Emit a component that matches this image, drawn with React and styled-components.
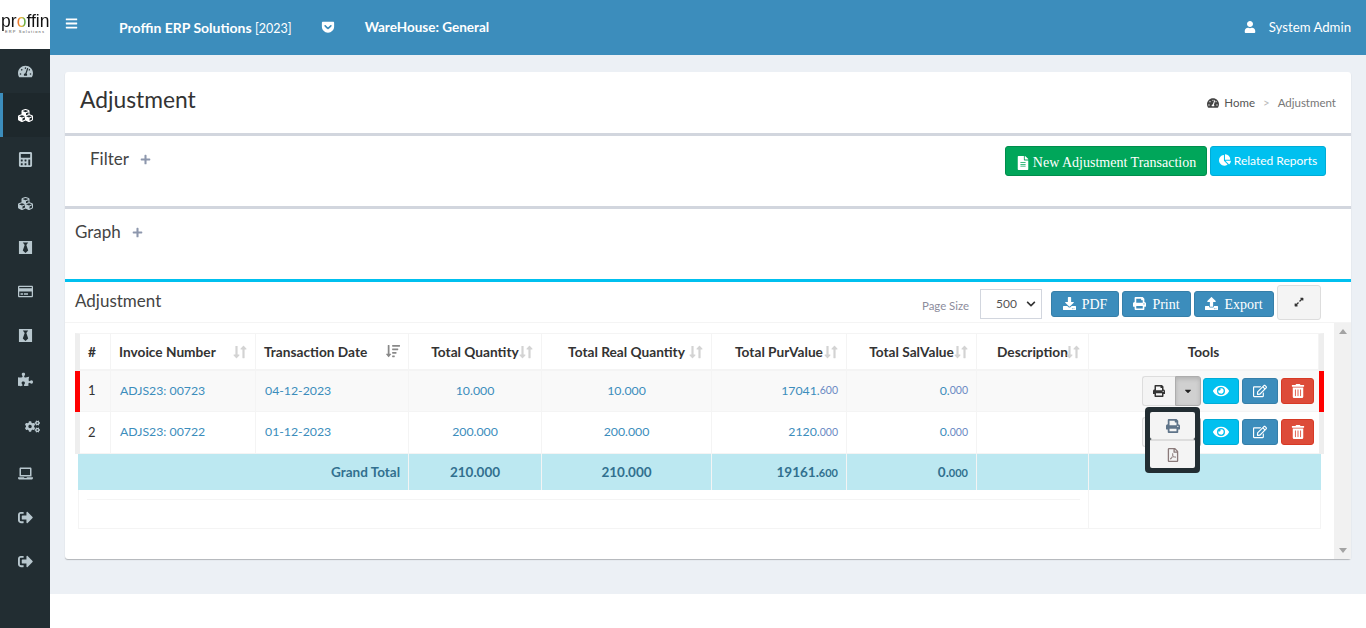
import React from 'react';
import styled, { createGlobalStyle } from 'styled-components';
import {
  FaBars, FaBlackTie, FaCalculator, FaChartPie, FaCogs, FaCubes, FaDownload, FaRegEdit,
  FaExpandAlt, FaEye, FaFileAlt, FaGetPocket, FaLaptop, FaLongArrowAltDown, FaLongArrowAltUp, FaPlus,
  FaPrint, FaPuzzlePiece, FaRegCreditCard, FaRegFilePdf, FaSignOutAlt, FaSortAmountDown, FaTachometerAlt,
  FaTrashAlt, FaUpload, FaUser, FaCaretDown, FaChevronDown,
} from 'react-icons/fa';

const Global = createGlobalStyle`
  html, body { margin: 0; padding: 0; height: 628px; overflow: hidden; background: #fff; }
  body { font-family: Lato, "Noto Sans", sans-serif; font-size: 14px; color: #333; }
  * { box-sizing: border-box; }
`;

const Shell = styled.div`
  display: flex;
  height: 628px;
`;

const Sidebar = styled.aside`
  width: 50px;
  flex: none;
  background: #222d32;
`;

const LogoBox = styled.div`
  height: 49px;
  background: #fff;
  display: flex;
  flex-direction: column;
  align-items: center;
  padding-top: 12px;
  color: #111;
  overflow: hidden;
`;

const LogoName = styled.div`
  font: 400 19px/18px "Liberation Sans", sans-serif;
  transform: scaleX(0.92);
  & b {
    font-weight: 400;
    background: linear-gradient(90deg, #e8562a, #f0b030 45%, #3fae49);
    -webkit-background-clip: text;
    background-clip: text;
    color: transparent;
  }
`;

const LogoTag = styled.div`
  margin-top: -1px;
  font: 400 4px/6px "Liberation Sans", sans-serif;
  letter-spacing: 1.1px;
  color: #555;
`;

const SideItem = styled.div`
  height: ${p => p.$tall ? 50 : 44}px;
  display: flex;
  align-items: center;
  justify-content: center;
  padding-left: ${p => p.$shift ? 14 : 0}px;
  color: ${p => p.$active ? '#fff' : '#b8c7ce'};
  background: ${p => p.$active ? '#1e282c' : 'transparent'};
  box-shadow: ${p => p.$active ? 'inset 3px 0 0 #3c8dbc' : 'none'};
  font-size: 15px;
`;

const Main = styled.div`
  flex: 1;
  display: flex;
  flex-direction: column;
  min-width: 0;
`;

const TopBar = styled.header`
  height: 55px;
  flex: none;
  background: #3c8dbc;
  color: #fff;
  display: flex;
  align-items: center;
  padding: 0 15px 1px;
  font-size: 14px;
`;

const Burger = styled.div`
  display: flex;
  font-size: 13px;
  margin: -7px 41px 0 0;
`;

const Brand = styled.div`
  font-size: ${p => p.$size || 14}px;
  font-weight: 700;
  & span { font-weight: 400; font-size: 12.5px; }
`;

const Pocket = styled.div`
  display: flex;
  font-size: 14px;
  margin: 0 30px 0 29px;
`;

const UserBox = styled.div`
  margin-left: auto;
  display: flex;
  align-items: center;
  gap: 13px;
  font-size: 13.2px;
`;

const Content = styled.main`
  height: 539px;
  flex: none;
  background: #ecf0f5;
  padding: 17px 15px 35px;
`;

const Card = styled.section`
  height: 487px;
  background: #fff;
  border-radius: 3px;
  box-shadow: 0 1px 1px rgba(0, 0, 0, 0.25);
  display: flex;
  flex-direction: column;
`;

const PageHead = styled.div`
  height: 64px;
  flex: none;
  padding: 0 15px;
  display: flex;
  align-items: center;
  justify-content: space-between;
  border-bottom: 3px solid #d2d6de;
`;

const PageTitle = styled.h1`
  margin: -7px 0 0;
  font-size: 22.8px;
  font-weight: 400;
  color: #333;
`;

const Crumbs = styled.div`
  display: flex;
  align-items: center;
  font-size: 11.5px;
  color: #555;
  & svg { margin-right: 5px; color: #444; font-size: 12px; }
`;

const CrumbSep = styled.span`
  color: #bbb;
  margin: 0 8px;
`;

const CrumbLast = styled.span`
  color: #777;
`;

const FilterBar = styled.div`
  height: 73px;
  flex: none;
  padding: 10px 25px 0;
  display: flex;
  justify-content: space-between;
  align-items: flex-start;
  border-bottom: 3px solid #d2d6de;
`;

const GraphBar = styled.div`
  height: 70px;
  flex: none;
  padding: 12px 10px 0;
`;

const Collapsible = styled.div`
  display: flex;
  align-items: center;
  gap: 11px;
  margin-top: ${p => p.$drop || 0}px;
  font-size: 17px;
  color: #444;
  & svg { font-size: 11px; color: #8d97ad; margin-top: 2px; }
`;

const Actions = styled.div`
  display: flex;
  gap: 3px;
`;

const NewButton = styled.button`
  height: 30px;
  width: ${p => p.$w}px;
  border: 1px solid ${p => p.$tone === 'green' ? '#008d4c' : '#00acd6'};
  border-radius: 3px;
  background: ${p => p.$tone === 'green' ? '#00a65a' : '#00c0ef'};
  color: #fff;
  display: inline-flex;
  align-items: center;
  justify-content: center;
  gap: 3px;
  padding: ${p => p.$tone === 'green' ? '3px 0 0' : '0 0 2px'};
  font: ${p => p.$tone === 'green' ? '14px "Liberation Serif", serif' : '12px Lato, sans-serif'};
`;

const ListSection = styled.div`
  flex: 1;
  min-height: 0;
  border-top: 3px solid #00c0ef;
  display: flex;
  flex-direction: column;
`;

const ListHead = styled.div`
  height: 41px;
  flex: none;
  display: flex;
  align-items: center;
  padding: 0 30px 0 10px;
  border-bottom: 1px solid #f4f4f4;
`;

const ListTitle = styled.h3`
  margin: -3px auto 0 0;
  font-size: 17px;
  font-weight: 400;
  color: #444;
`;

const SizeLabel = styled.span`
  font-size: 11.4px;
  color: #8c8c9c;
  margin: 6px 11px 0 0;
`;

const SizeSelect = styled.div`
  width: 62px;
  height: 30px;
  margin: 3px 9px 0 0;
  border: 1px solid #d2d6de;
  display: flex;
  align-items: center;
  justify-content: space-between;
  padding: 0 5px 0 15px;
  font-size: 12px;
  color: #555;
  & svg { font-size: 10px; color: #333; }
`;

const ToolButton = styled.button`
  width: ${p => p.$w}px;
  height: 26px;
  margin: 3px 3px 0 0;
  border: 1px solid #367fa9;
  border-radius: 3px;
  background: #3c8dbc;
  color: #fff;
  display: inline-flex;
  align-items: center;
  justify-content: center;
  gap: 6px;
  padding: 3px 0 0;
  font: 14px "Liberation Serif", serif;
  & svg { font-size: 13px; margin-top: -3px; }
`;

const ExpandButton = styled.button`
  width: 44px;
  height: 35px;
  border: 1px solid #ddd;
  border-radius: 3px;
  background: #f4f4f4;
  color: #333;
  display: inline-flex;
  align-items: center;
  justify-content: center;
  padding: 0;
  font-size: 10px;
`;

const ScrollArea = styled.div`
  flex: 1;
  min-height: 0;
  display: flex;
`;

const TableWrap = styled.div`
  flex: 1;
  min-width: 0;
  padding: 10px 0 0 10px;
  position: relative;
`;

const Scrollbar = styled.div`
  width: 17px;
  flex: none;
  background: #f1f1f1;
  display: flex;
  flex-direction: column;
  justify-content: space-between;
  align-items: center;
  padding: 6px 0;
`;

const ScrollArrow = styled.div`
  width: 0;
  height: 0;
  border-left: 4px solid transparent;
  border-right: 4px solid transparent;
  ${p => p.$down ? 'border-top: 5px solid #a3a3a3;' : 'border-bottom: 5px solid #a3a3a3;'}
`;

const COLS = '31px 145px 153px 133px 170px 135px 130px 112px 230px';

const Row = styled.div`
  display: grid;
  grid-template-columns: ${COLS};
  width: 1249px;
  height: ${p => p.$h}px;
  border-left: 5px solid ${p => p.$flag ? '#ff0000' : '#eeeeee'};
  border-right: 5px solid ${p => p.$flag ? '#ff0000' : '#eeeeee'};
  background: ${p => p.$odd ? '#f9f9f9' : '#fff'};
  border-top: ${p => p.$first ? '1px solid #f4f4f4' : 'none'};
`;

const HeadCell = styled.div`
  position: relative;
  display: flex;
  align-items: center;
  justify-content: ${p => p.$left ? 'flex-start' : 'center'};
  padding-left: ${p => p.$left ? 8 : 0}px;
  border-right: 1px solid #f4f4f4;
  border-bottom: 2px solid #f4f4f4;
  font-size: 13.7px;
  font-weight: 700;
  color: #333;
`;

const SortMark = styled.span`
  position: absolute;
  right: 8px;
  top: 10px;
  display: flex;
  color: ${p => p.$on ? '#888' : '#d3d3d3'};
  & svg { width: 7px; height: 16px; }
  & svg.amount { width: 14px; height: 14px; }
`;

const Cell = styled.div`
  display: flex;
  align-items: center;
  justify-content: ${p => p.$align === 'right' ? 'flex-end' : p.$align === 'center' ? 'center' : 'flex-start'};
  padding: 0 8px 2px ${p => p.$align || p.$plain ? 8 : 9}px;
  border-right: 1px solid #f4f4f4;
  border-bottom: 1px solid #f4f4f4;
  font-size: ${p => p.$plain ? 13 : 12.3}px;
  color: ${p => p.$plain ? '#333' : '#3c8dbc'};
  & small { font-size: 10.5px; color: #6b8ac4; }
`;

const ToolsCell = styled.div`
  display: flex;
  align-items: center;
  justify-content: flex-end;
  gap: 3px;
  padding: 0 5px 1px 0;
  border-bottom: 1px solid #f4f4f4;
`;

const SplitButton = styled.div`
  display: flex;
  height: 30px;
  margin-right: -1px;
`;

const SplitMain = styled.div`
  width: 33px;
  border: 1px solid #ddd;
  border-right: none;
  border-radius: 3px 0 0 3px;
  background: #f4f4f4;
  color: #333;
  display: flex;
  align-items: center;
  justify-content: center;
  font-size: 12px;
`;

const SplitCaret = styled.div`
  width: 26px;
  border: 1px solid #adadad;
  border-radius: 0 3px 3px 0;
  background: #d0d0d0;
  box-shadow: inset 0 2px 4px rgba(0, 0, 0, 0.15);
  color: #222;
  display: flex;
  align-items: center;
  justify-content: center;
  font-size: 10px;
`;

const RowButton = styled.div`
  width: ${p => p.$w || 36}px;
  height: 26px;
  border-radius: 3px;
  border: 1px solid ${p => p.$border};
  background: ${p => p.$bg};
  color: #fff;
  display: flex;
  align-items: center;
  justify-content: center;
  font-size: ${p => p.$size || 14}px;
`;

const Dropdown = styled.div`
  position: absolute;
  left: 1080px;
  top: 84px;
  width: 55px;
  height: 66px;
  padding: 5px;
  background: #222d32;
  border-radius: 4px;
  z-index: 3;
  display: flex;
  flex-direction: column;
`;

const DropItem = styled.div`
  flex: 1;
  background: #f4f4f4;
  border-radius: 2px;
  display: flex;
  align-items: center;
  justify-content: center;
  font-size: 14px;
  color: ${p => p.$tone};
  & + & { border-top: 2px solid #ddd; }
`;

const TotalRow = styled.div`
  display: grid;
  grid-template-columns: 331px 133px 170px 135px 130px 112px 232px;
  width: 1243px;
  height: 36px;
  margin-left: 3px;
  background: #bce8f1;
`;

const TotalCell = styled.div`
  display: flex;
  align-items: center;
  justify-content: ${p => p.$align === 'center' ? 'center' : 'flex-end'};
  padding: 0 8px;
  border-right: ${p => p.$last ? 'none' : '1px solid #f4f4f4'};
  font-size: 13.5px;
  font-weight: 700;
  color: #31708f;
  & small { font-size: 11px; }
`;

const FootRow = styled.div`
  display: grid;
  grid-template-columns: 1009px 232px;
  width: 1243px;
  height: 39px;
  margin-left: 3px;
  border: 1px solid #f4f4f4;
  border-top: none;
`;

const FootLine = styled.div`
  margin: 9px 8px 0;
  height: 1px;
  background: #f4f4f4;
`;

const FootSide = styled.div`
  border-left: 1px solid #f4f4f4;
`;

const Spacer = styled.div`
  height: 34px;
  flex: none;
  background: #fff;
`;

const sideItems = [
  { icon: FaTachometerAlt },
  { icon: FaCubes, active: true },
  { icon: FaCalculator },
  { icon: FaCubes },
  { icon: FaBlackTie },
  { icon: FaRegCreditCard },
  { icon: FaBlackTie },
  { icon: FaPuzzlePiece },
  { icon: FaCogs, tall: true, shift: true },
  { icon: FaLaptop },
  { icon: FaSignOutAlt },
  { icon: FaSignOutAlt },
];

const columns = [
  { label: '#', left: true },
  { label: 'Invoice Number', left: true, sort: true },
  { label: 'Transaction Date', left: true, sort: true, on: true },
  { label: 'Total Quantity', sort: true },
  { label: 'Total Real Quantity', sort: true },
  { label: 'Total PurValue', sort: true },
  { label: 'Total SalValue', sort: true },
  { label: 'Description', sort: true },
  { label: 'Tools' },
];

const rows = [
  { no: 1, invoice: 'ADJS23: 00723', date: '04-12-2023', qty: '10.000', real: '10.000', pur: ['17041.', '600'], sal: ['0.', '000'], flag: true },
  { no: 2, invoice: 'ADJS23: 00722', date: '01-12-2023', qty: '200.000', real: '200.000', pur: ['2120.', '000'], sal: ['0.', '000'] },
];

function RowTools() {
  return (
    <ToolsCell>
      <SplitButton>
        <SplitMain><FaPrint /></SplitMain>
        <SplitCaret><FaCaretDown /></SplitCaret>
      </SplitButton>
      <RowButton $bg="#00c0ef" $border="#00acd6" $size={16}><FaEye /></RowButton>
      <RowButton $bg="#3c8dbc" $border="#367fa9"><FaRegEdit /></RowButton>
      <RowButton $w={33} $bg="#dd4b39" $border="#d73925"><FaTrashAlt /></RowButton>
    </ToolsCell>
  );
}

export default function App() {
  return (
    <Shell>
      <Global />
      <Sidebar>
        <LogoBox>
          <LogoName>pr<b>o</b>ffin</LogoName>
          <LogoTag>ERP Solutions</LogoTag>
        </LogoBox>
        {sideItems.map((item, i) => (
          <SideItem key={i} $active={item.active} $tall={item.tall} $shift={item.shift}>
            <item.icon />
          </SideItem>
        ))}
      </Sidebar>
      <Main>
        <TopBar>
          <Burger><FaBars /></Burger>
          <Brand>Proffin ERP Solutions <span>[2023]</span></Brand>
          <Pocket><FaGetPocket /></Pocket>
          <Brand $size={13.5}>WareHouse: General</Brand>
          <UserBox><FaUser size={12} />System Admin</UserBox>
        </TopBar>
        <Content>
          <Card>
            <PageHead>
              <PageTitle>Adjustment</PageTitle>
              <Crumbs>
                <FaTachometerAlt />Home<CrumbSep>&gt;</CrumbSep><CrumbLast>Adjustment</CrumbLast>
              </Crumbs>
            </PageHead>
            <FilterBar>
              <Collapsible $drop={2}>Filter <FaPlus /></Collapsible>
              <Actions>
                <NewButton $tone="green" $w={202}><FaFileAlt />New Adjustment Transaction</NewButton>
                <NewButton $tone="cyan" $w={116}><FaChartPie />Related Reports</NewButton>
              </Actions>
            </FilterBar>
            <GraphBar>
              <Collapsible>Graph <FaPlus /></Collapsible>
            </GraphBar>
            <ListSection>
              <ListHead>
                <ListTitle>Adjustment</ListTitle>
                <SizeLabel>Page Size</SizeLabel>
                <SizeSelect>500<FaChevronDown /></SizeSelect>
                <ToolButton $w={68}><FaDownload />PDF</ToolButton>
                <ToolButton $w={69}><FaPrint />Print</ToolButton>
                <ToolButton $w={80}><FaUpload />Export</ToolButton>
                <ExpandButton><FaExpandAlt /></ExpandButton>
              </ListHead>
              <ScrollArea>
                <TableWrap>
                  <Row $h={38} $first>
                    {columns.map(col => (
                      <HeadCell key={col.label} $left={col.left}>
                        {col.label}
                        {col.sort && (
                          <SortMark $on={col.on}>
                            {col.on ? <FaSortAmountDown className="amount" /> : <><FaLongArrowAltDown /><FaLongArrowAltUp /></>}
                          </SortMark>
                        )}
                      </HeadCell>
                    ))}
                  </Row>
                  {rows.map((row, i) => (
                    <Row key={row.no} $h={i === 0 ? 41 : 42} $flag={row.flag} $odd={i === 0}>
                      <Cell $plain>{row.no}</Cell>
                      <Cell>{row.invoice}</Cell>
                      <Cell>{row.date}</Cell>
                      <Cell $align="center">{row.qty}</Cell>
                      <Cell $align="center">{row.real}</Cell>
                      <Cell $align="right">{row.pur[0]}<small>{row.pur[1]}</small></Cell>
                      <Cell $align="right">{row.sal[0]}<small>{row.sal[1]}</small></Cell>
                      <Cell />
                      <RowTools />
                    </Row>
                  ))}
                  <TotalRow>
                    <TotalCell>Grand Total</TotalCell>
                    <TotalCell $align="center">210.000</TotalCell>
                    <TotalCell $align="center">210.000</TotalCell>
                    <TotalCell>19161.<small>600</small></TotalCell>
                    <TotalCell>0.<small>000</small></TotalCell>
                    <TotalCell />
                    <TotalCell $last />
                  </TotalRow>
                  <FootRow>
                    <FootLine />
                    <FootSide />
                  </FootRow>
                  <Dropdown>
                    <DropItem $tone="#5f7489"><FaPrint /></DropItem>
                    <DropItem $tone="#8a7a7a"><FaRegFilePdf /></DropItem>
                  </Dropdown>
                </TableWrap>
                <Scrollbar>
                  <ScrollArrow />
                  <ScrollArrow $down />
                </Scrollbar>
              </ScrollArea>
            </ListSection>
          </Card>
        </Content>
        <Spacer />
      </Main>
    </Shell>
  );
}
